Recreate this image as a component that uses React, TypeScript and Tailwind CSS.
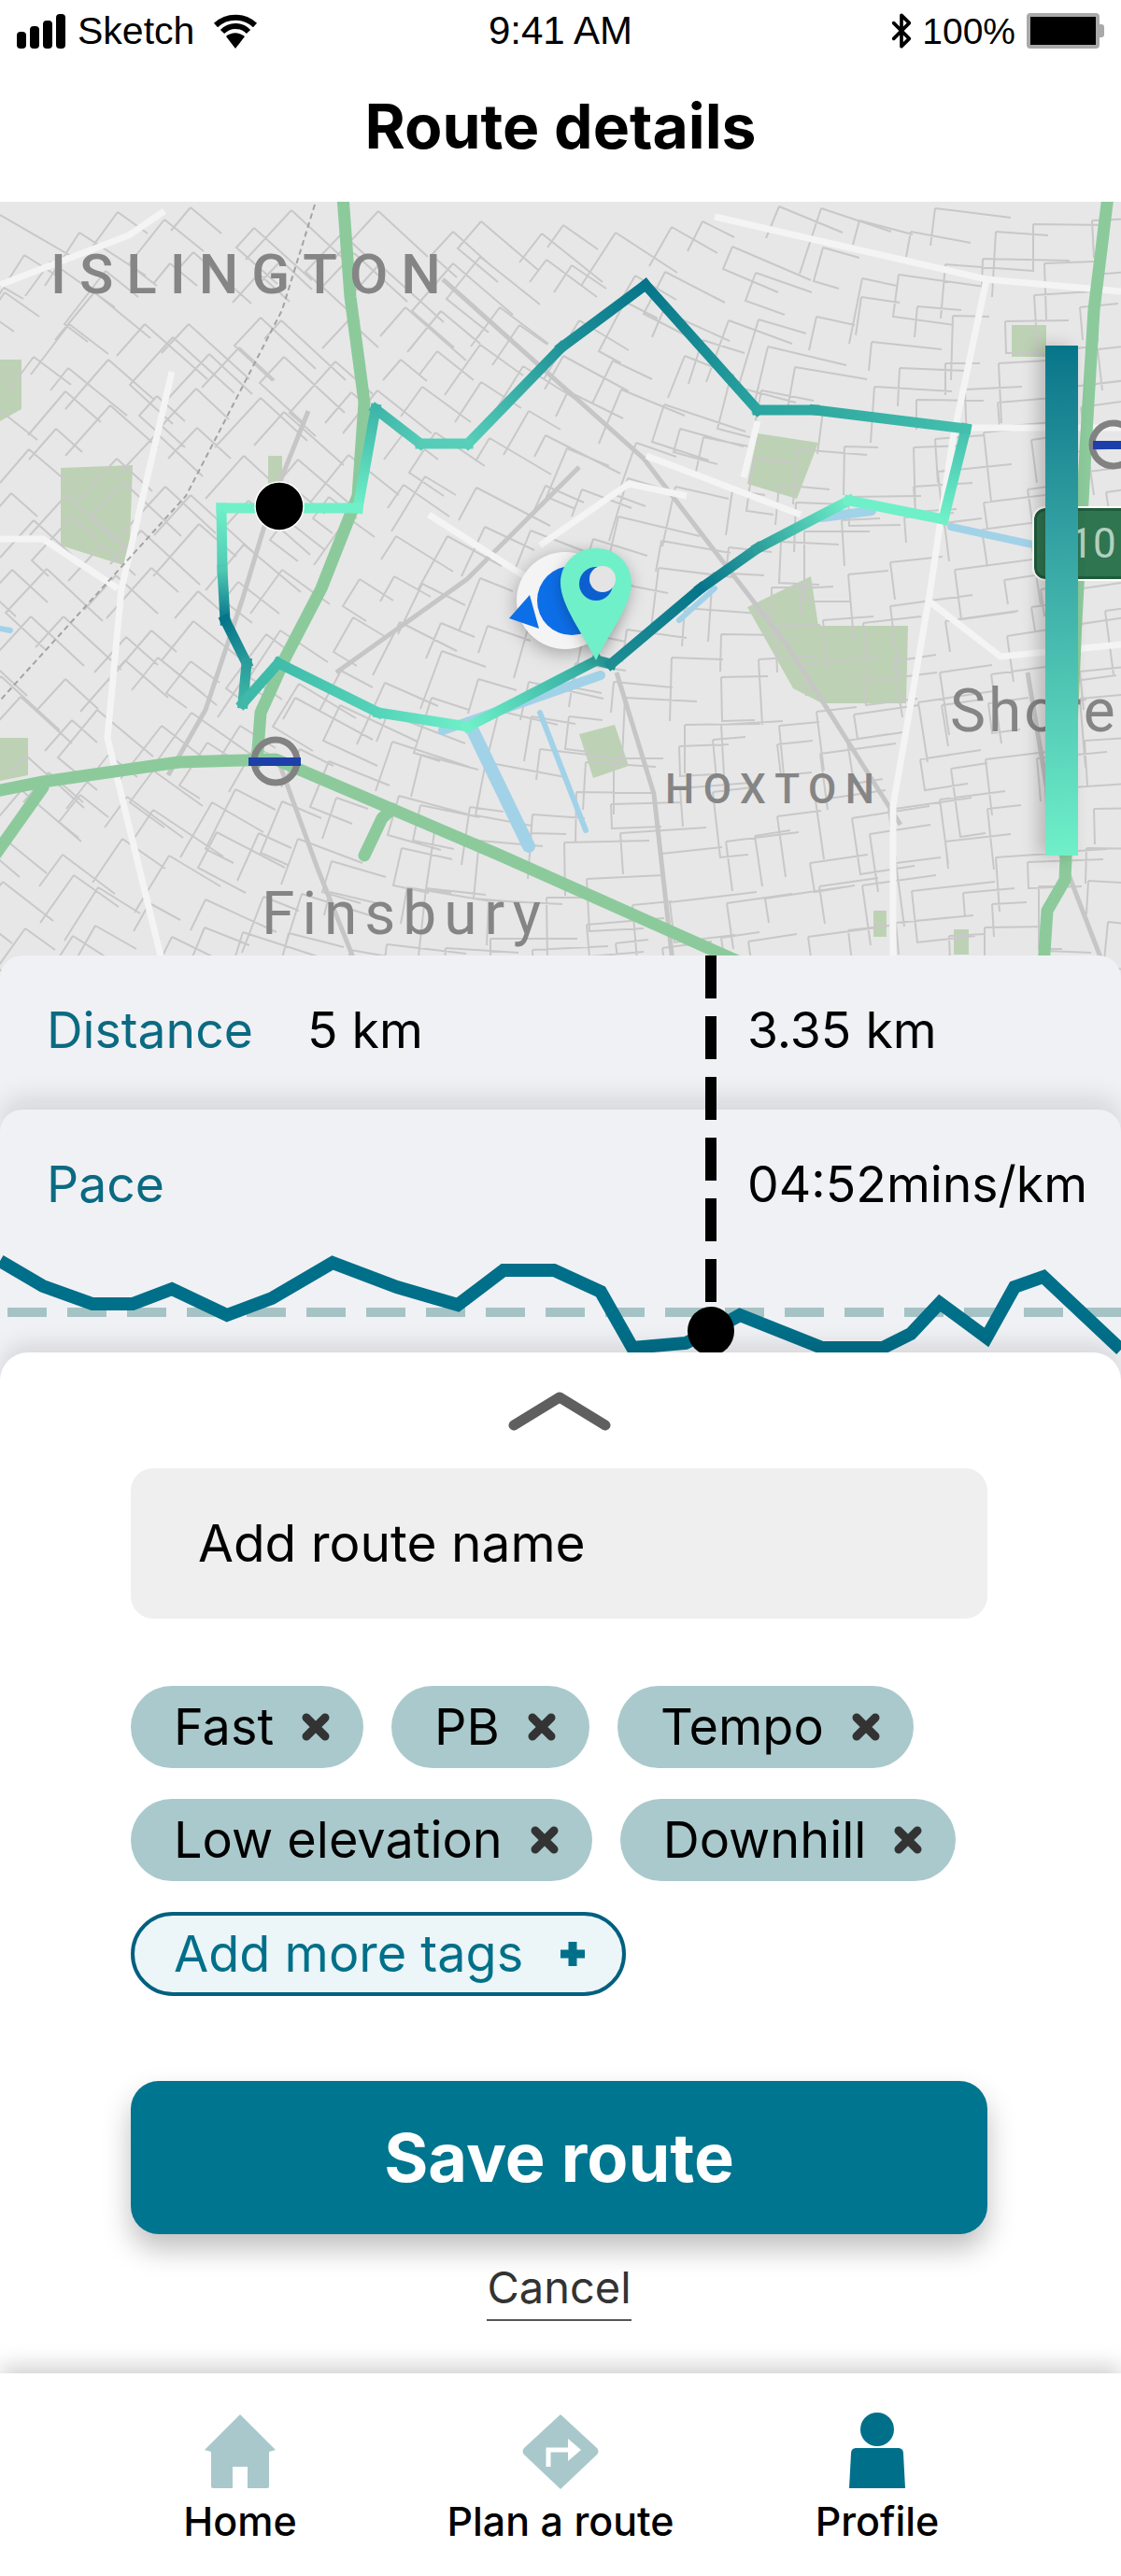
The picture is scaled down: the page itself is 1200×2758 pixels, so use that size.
import { Bluetooth } from "lucide-react";

const MINT = "#6ff0c8";
const DEEP = "#06758a";

// route traced from the map, colour per vertex
const ROUTE = [
  [299, 544, MINT],
  [237, 544, MINT],
  [238, 610, "#4fc9b4"],
  [241, 664, DEEP],
  [264, 710, "#2a9c9c"],
  [260, 753, "#3fb8a8"],
  [298, 710, "#3fbcaa"],
  [405, 763, "#55d4ba"],
  [501, 778, MINT],
  [639, 707, "#2fa69e"],
  [654, 711, "#1f8f94"],
  [750, 630, DEEP],
  [811, 587, "#2d9f9c"],
  [909, 536, MINT],
  [1010, 556, MINT],
  [1034, 459, "#44bfae"],
  [872, 439, "#2fa9a0"],
  [811, 439, "#2aa5a0"],
  [691, 305, DEEP],
  [601, 372, "#1f9398"],
  [501, 475, "#58cfb8"],
  [450, 475, "#55ccb8"],
  [402, 438, "#3db5a8"],
  [383, 544, MINT],
  [299, 544, MINT],
] as const;

const CHART =
  "0,1350 46,1377 99,1396 142,1396 184,1380 243,1408 291,1390 356,1352 425,1378 490,1397 539,1360 593,1360 643,1383 677,1443 734,1438 761,1425 792,1408 880,1443 945,1443 975,1428 1006,1395 1056,1432 1086,1378 1117,1367 1200,1445";

const WHITE_ROADS = [
  "765,232 1056,299 1200,312",
  "1056,299 1020,470 995,637 956,863 956,1030",
  "692,488 857,551",
  "459,551 635,664",
  "578,584 673,518 735,531",
  "184,398 130,630 115,790 176,1040",
  "0,577 46,577 126,630",
  "0,305 138,252 176,226",
  "811,451 796,511",
  "995,644 1071,703 1200,690",
  "1200,458 1033,458",
];

const GREY_ROADS = [
  "474,299 689,491 842,690 964,883",
  "330,440 290,540 260,640 220,760 180,830",
  "620,500 500,620 360,720",
  "660,720 700,850 720,1030",
  "300,820 340,930 380,1030",
  "1100,720 1130,900 1180,1030",
];

const STREETS = buildStreets();

// filler block pattern, the small streets of the map
function buildStreets() {
  let seed = 41;
  const rnd = () => {
    seed = (seed * 16807) % 2147483647;
    return seed / 2147483647;
  };
  let d = "";
  for (let y = 216; y < 1040; y += 48) {
    for (let x = 0; x < 1200; x += 50) {
      const angle = 0.3 + 0.45 * Math.sin(x / 330 + y / 420);
      const cos = Math.cos(angle);
      const sin = Math.sin(angle);
      const px = x + rnd() * 36;
      const py = y + rnd() * 36;
      const a = 35 + rnd() * 60;
      const b = 25 + rnd() * 50;
      d += `M${px.toFixed(0)} ${py.toFixed(0)}l${(a * cos).toFixed(0)} ${(a * sin).toFixed(0)}`;
      d += `M${px.toFixed(0)} ${py.toFixed(0)}l${(-b * sin).toFixed(0)} ${(b * cos).toFixed(0)}`;
      if (rnd() > 0.72) {
        d += `l${(a * 0.7 * cos).toFixed(0)} ${(a * 0.7 * sin).toFixed(0)}`;
      }
    }
  }
  return d;
}

function CloseIcon() {
  return (
    <svg width="30" height="30" viewBox="0 0 30 30" className="shrink-0">
      <path d="M5 5 25 25M25 5 5 25" stroke="#333" strokeWidth="9" strokeLinecap="round" />
    </svg>
  );
}

function Chip({ label }: { label: string }) {
  return (
    <div className="flex h-[88px] items-center gap-[30px] rounded-full bg-[#aac9cc] pl-[46px] pr-[36px] text-[54px] leading-none text-black">
      <span>{label}</span>
      <CloseIcon />
    </div>
  );
}

function RouteMap() {
  return (
    <svg viewBox="0 216 1200 831" className="absolute inset-0 h-full w-full blur-[0.6px]">
      <defs>
        {ROUTE.slice(1).map((p, i) => (
          <linearGradient
            key={i}
            id={`seg${i}`}
            gradientUnits="userSpaceOnUse"
            x1={ROUTE[i][0]}
            y1={ROUTE[i][1]}
            x2={p[0]}
            y2={p[1]}
          >
            <stop offset="0" stopColor={ROUTE[i][2]} />
            <stop offset="1" stopColor={p[2]} />
          </linearGradient>
        ))}
      </defs>

      <g fill="#bdd2b4">
        <polygon points="65,501 142,498 138,607 65,584" />
        <polygon points="811,464 876,474 853,534 800,518" />
        <polygon points="800,650 868,617 876,670 972,670 970,753 880,753 849,737" />
        <polygon points="620,786 658,776 673,820 635,833" />
        <polygon points="0,385 23,385 23,438 0,451" />
        <rect x="1083" y="348" width="37" height="34" />
        <rect x="287" y="488" width="15" height="30" />
        <polygon points="0,790 30,790 30,830 0,836" />
        <rect x="935" y="975" width="14" height="28" />
        <rect x="1021" y="995" width="16" height="27" />
      </g>

      <path d={STREETS} fill="none" stroke="#c8c8c8" strokeWidth="2" />
      <g fill="none" stroke="#c6c6c6" strokeWidth="5">
        {GREY_ROADS.map((r) => (
          <polyline key={r} points={r} />
        ))}
      </g>
      <g fill="none" stroke="#f4f4f4" strokeWidth="7">
        {WHITE_ROADS.map((r) => (
          <polyline key={r} points={r} />
        ))}
      </g>
      <polyline points="337,219 302,332 199,531 0,750" fill="none" stroke="#a3a3a3" strokeWidth="2" strokeDasharray="6 4" />

      <g fill="none" stroke="#a2d2e8" strokeLinecap="round">
        <line x1="505" y1="780" x2="566" y2="906" strokeWidth="14" />
        <line x1="578" y1="763" x2="627" y2="889" strokeWidth="6" />
        <line x1="474" y1="782" x2="643" y2="723" strokeWidth="10" />
        <line x1="1018" y1="564" x2="1110" y2="584" strokeWidth="8" />
        <line x1="880" y1="554" x2="933" y2="547" strokeWidth="10" />
        <line x1="727" y1="664" x2="765" y2="630" strokeWidth="6" />
        <line x1="0" y1="673" x2="11" y2="675" strokeWidth="6" />
      </g>

      <g fill="none" stroke="#8cca9c" strokeWidth="13" strokeLinejoin="round" strokeLinecap="round">
        <polyline points="367,210 375,318 390,431 383,531 344,630 306,703 279,763 275,816" />
        <polyline points="-5,847 46,837 191,816 295,813 536,916 803,1035" />
        <polyline points="46,843 -5,915" />
        <polyline points="420,866 409,876 390,916" />
        <polyline points="1186,210 1171,332 1163,464 1152,664 1140,942 1121,975 1117,1035" />
      </g>

      <g fill="none">
        <circle cx="295" cy="815" r="23" stroke="#828282" strokeWidth="7" />
        <circle cx="1192" cy="476" r="23" stroke="#828282" strokeWidth="7" />
      </g>
      <rect x="266" y="811" width="56" height="9" fill="#1c3fa9" />
      <rect x="1170" y="472" width="30" height="9" fill="#1c3fa9" />

      {ROUTE.slice(1).map((p, i) => (
        <line
          key={i}
          x1={ROUTE[i][0]}
          y1={ROUTE[i][1]}
          x2={p[0]}
          y2={p[1]}
          stroke={`url(#seg${i})`}
          strokeWidth="11"
          strokeLinecap="square"
        />
      ))}

      <circle cx="299" cy="542" r="26" fill="#000" stroke="#fff" strokeWidth="1.5" />

      {/* current position marker with the pin on top */}
      <circle cx="605" cy="643" r="52" fill="#f4f4f4" style={{ filter: "drop-shadow(0 4px 10px rgba(0,0,0,.3))" }} />
      <polygon points="545,662 567,637 577,673" fill="#0d6fe8" />
      <circle cx="612" cy="643" r="37" fill="#0d6fe8" />
      <path
        d="M638 587c21 0 38 16 38 37 0 24-24 54-38 83-14-29-38-59-38-83 0-21 17-37 38-37z"
        fill={MINT}
        style={{ filter: "drop-shadow(0 4px 8px rgba(0,0,0,.25))" }}
      />
      <circle cx="638" cy="625" r="18" fill="#0d5fd0" />
      <circle cx="645" cy="620" r="14" fill="#e4e4e4" />
    </svg>
  );
}

export default function App() {
  return (
    <div className="relative flex h-[2758px] w-[1200px] flex-col overflow-hidden bg-white font-['Inter',sans-serif] text-black">
      <header className="h-[216px] shrink-0">
        <div className="grid h-[66px] grid-cols-3 items-center px-[18px] font-['Liberation_Sans',sans-serif] text-[39px] leading-none">
          <div className="flex items-center">
            <div className="flex items-end gap-[4px]">
              <span className="h-[18px] w-[10px] rounded-[4px] bg-black" />
              <span className="h-[24px] w-[10px] rounded-[4px] bg-black" />
              <span className="h-[30px] w-[10px] rounded-[4px] bg-black" />
              <span className="h-[37px] w-[10px] rounded-[4px] bg-black" />
            </div>
            <span className="ml-[13px] text-[41px]">Sketch</span>
            <svg width="48" height="37" viewBox="0 0 48 37" className="ml-[20px]">
              <path d="M3 12C15 1 33 1 45 12M10 19C18 11 30 11 38 19" fill="none" stroke="#000" strokeWidth="6" />
              <path d="M24 37 14 24C20 19 28 19 34 24Z" fill="#000" />
            </svg>
          </div>
          <div className="text-center text-[42px]">9:41 AM</div>
          <div className="flex items-center justify-end">
            <Bluetooth size={40} strokeWidth={2.2} className="mr-[-1px]" />
            <span className="ml-[3px]">100%</span>
            <div className="ml-[12px] flex items-center">
              <div className="h-[38px] w-[78px] rounded-[4px] border-[4px] border-[#a9a9a9] bg-black" />
              <div className="h-[14px] w-[5px] rounded-r-[3px] bg-[#a9a9a9]" />
            </div>
          </div>
        </div>
        <h1 className="pt-[34px] text-center text-[66px] font-bold leading-[70px]">Route details</h1>
      </header>

      <section className="relative h-[831px] shrink-0 overflow-hidden bg-[#e7e7e7] font-['Roboto',sans-serif]">
        <RouteMap />
        <span className="absolute left-[54px] top-[42px] text-[60px] font-medium leading-[72px] tracking-[14px] text-[#858585]">ISLINGTON</span>
        <span className="absolute left-[712px] top-[603px] text-[44px] font-medium leading-[52px] tracking-[9.5px] text-[#858585]">HOXTON</span>
        <span className="absolute left-[280px] top-[725px] text-[64px] leading-[76px] tracking-[8px] text-[#858585]">Finsbury</span>
        <span className="absolute left-[1017px] top-[508px] text-[64px] leading-[76px] tracking-[3px] text-[#858585]">Shore</span>

        <div className="absolute left-[1107px] top-[328px] flex h-[76px] w-[110px] items-center justify-center rounded-[12px] border-[3px] border-[#1f5c3c] bg-[#2f7550] pl-[16px] text-[44px] leading-none text-[#b3d0bf] outline-2 outline-white">
          10
        </div>
        <div className="absolute left-[1119px] top-[154px] h-[546px] w-[35px] bg-gradient-to-b from-[#06758a] to-[#6ff0c8] shadow-[-8px_0_18px_rgba(0,0,0,0.2)]" />
      </section>

      <section className="relative -mt-[24px] shrink-0">
        <div className="grid h-[190px] grid-cols-[279px_471px_1fr] rounded-t-[24px] bg-[#f0f1f5] pl-[50px] pt-[48px] text-[53.5px] leading-[64px]">
          <span className="text-[#0a6a82]">Distance</span>
          <span>5 km</span>
          <span>3.35 km</span>
        </div>
        <div className="-mt-[25px] grid h-[290px] grid-cols-[279px_471px_1fr] rounded-t-[24px] bg-[#f0f1f5] pl-[50px] pt-[48px] text-[53.5px] leading-[64px] shadow-[0_-14px_26px_rgba(0,0,0,0.1)]">
          <span className="text-[#0a6a82]">Pace</span>
          <span />
          <span>04:52mins/km</span>
        </div>
        <svg viewBox="0 1023 1200 455" className="absolute left-0 top-0 h-[455px] w-[1200px]">
          <line x1="0" y1="1405" x2="1200" y2="1405" stroke="#a5c3c5" strokeWidth="10" strokeDasharray="42 22" strokeDashoffset="-8" />
          <polyline points={CHART} fill="none" stroke="#006f89" strokeWidth="14" />
          <line x1="761" y1="1023" x2="761" y2="1430" stroke="#000" strokeWidth="12" strokeDasharray="46 19" />
          <ellipse cx="761" cy="1425" rx="25" ry="26" fill="#000" />
        </svg>
      </section>

      <section className="relative z-10 -mt-[30px] flex h-[1093px] shrink-0 flex-col rounded-t-[30px] bg-white pl-[140px] pr-[143px] shadow-[0_-10px_22px_rgba(0,0,0,0.1)]">
        <svg width="110" height="44" viewBox="0 0 110 44" className="mt-[41px] self-center">
          <polyline points="6,37 55,7 104,37" fill="none" stroke="#5f5f5f" strokeWidth="11" strokeLinecap="round" strokeLinejoin="round" />
        </svg>
        <div className="mt-[39px] flex h-[161px] shrink-0 items-center rounded-[24px] bg-[#efefef] pl-[72px] text-[55px] leading-none">
          Add route name
        </div>
        <div className="mt-[72px] flex flex-wrap gap-x-[30px] gap-y-[33px]">
          <Chip label="Fast" />
          <Chip label="PB" />
          <Chip label="Tempo" />
          <Chip label="Low elevation" />
          <Chip label="Downhill" />
          <div className="flex h-[90px] items-center gap-[38px] rounded-full border-[4px] border-[#00607f] bg-[#ecf5f7] pl-[42px] pr-[38px] text-[54px] leading-none text-[#00708a]">
            <span>Add more tags</span>
            <svg width="30" height="30" viewBox="0 0 30 30" className="shrink-0">
              <path d="M15 2V28M2 15H28" stroke="#00708a" strokeWidth="9" />
            </svg>
          </div>
        </div>
        <button className="mt-[91px] h-[164px] shrink-0 rounded-[30px] bg-[#00758f] text-[72px] font-bold text-white shadow-[0_16px_30px_rgba(0,0,0,0.25)]">
          Save route
        </button>
        <span className="mt-[27px] self-center border-b-2 border-[#555] pb-[4px] text-[47px] leading-[60px] text-[#333]">Cancel</span>
      </section>

      <nav className="relative z-20 grid h-[217px] shrink-0 grid-cols-[514px_172px_506px] whitespace-nowrap bg-white pt-[42px] text-[43px] font-medium leading-none shadow-[0_-8px_22px_rgba(0,0,0,0.18)]">
        <div className="flex flex-col items-center">
          <svg width="76" height="80" viewBox="0 0 76 80" className="mt-[2px]">
            <path fillRule="evenodd" fill="#a9c8cc" d="M38 0 76 38 69 40V77a2 2 0 0 1-2 2H9a2 2 0 0 1-2-2V40L0 38ZM30 56V79H46V56Z" />
          </svg>
          <span className="mt-[13px]">Home</span>
        </div>
        <div className="flex flex-col items-center">
          <svg width="84" height="84" viewBox="0 0 84 84">
            <path d="M42 2 81 38a5 5 0 0 1 0 7L42 82 3 45a5 5 0 0 1 0-7Z" fill="#a9c8cc" />
            <path d="M29 58V40H52" fill="none" stroke="#fff" strokeWidth="5" />
            <path d="M50 28 64 40 50 52Z" fill="#fff" />
          </svg>
          <span className="mt-[11px]">Plan a route</span>
        </div>
        <div className="flex flex-col items-center">
          <svg width="60" height="82" viewBox="0 0 60 82">
            <ellipse cx="30" cy="18" rx="18" ry="18" fill="#00708a" />
            <path d="M8 38H52C56 38 58 40 58 44L60 81H0L2 44C2 40 4 38 8 38Z" fill="#00708a" />
          </svg>
          <span className="mt-[13px]">Profile</span>
        </div>
      </nav>
    </div>
  );
}
